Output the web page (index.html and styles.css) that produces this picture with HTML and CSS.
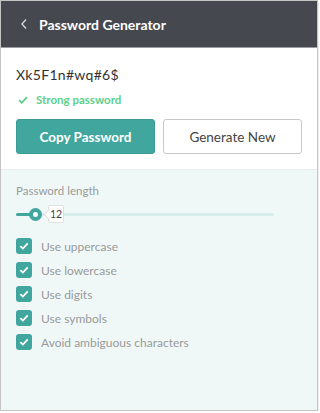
FILE: index.html
```html
<!DOCTYPE html>
<html>
<head>
<meta charset="utf-8">
<link rel="stylesheet" href="styles.css">
</head>
<body>
<div class="card">
  <div class="header">
    <svg class="back" width="8" height="12" viewBox="0 0 8 12"><path d="M6 1.5 L2 6 L6 10.5" fill="none" stroke="#d0d2d6" stroke-width="1.4"/></svg>
    <span class="title">Password Generator</span>
  </div>
  <div class="top">
    <div class="pw">Xk5F1n#wq#6$</div>
    <div class="strength">
      <svg width="10" height="8" viewBox="0 0 10 8"><path d="M1 4.2 L3.8 6.8 L9 1.2" fill="none" stroke="#5cd08a" stroke-width="1.8"/></svg>
      <span>Strong password</span>
    </div>
    <div class="buttons">
      <button class="btn primary">Copy Password</button>
      <button class="btn secondary">Generate New</button>
    </div>
  </div>
  <div class="settings">
    <div class="label">Password length</div>
    <div class="slider">
      <div class="track"><div class="fill"></div><div class="thumb"></div></div>
      <div class="value">12</div>
    </div>
    <ul class="options">
      <li><span class="cb"><svg width="10" height="8" viewBox="0 0 10 8"><path d="M1.3 4.2 L3.9 6.6 L8.7 1.4" fill="none" stroke="#fff" stroke-width="1.8"/></svg></span>Use uppercase</li>
      <li><span class="cb"><svg width="10" height="8" viewBox="0 0 10 8"><path d="M1.3 4.2 L3.9 6.6 L8.7 1.4" fill="none" stroke="#fff" stroke-width="1.8"/></svg></span>Use lowercase</li>
      <li><span class="cb"><svg width="10" height="8" viewBox="0 0 10 8"><path d="M1.3 4.2 L3.9 6.6 L8.7 1.4" fill="none" stroke="#fff" stroke-width="1.8"/></svg></span>Use digits</li>
      <li><span class="cb"><svg width="10" height="8" viewBox="0 0 10 8"><path d="M1.3 4.2 L3.9 6.6 L8.7 1.4" fill="none" stroke="#fff" stroke-width="1.8"/></svg></span>Use symbols</li>
      <li><span class="cb"><svg width="10" height="8" viewBox="0 0 10 8"><path d="M1.3 4.2 L3.9 6.6 L8.7 1.4" fill="none" stroke="#fff" stroke-width="1.8"/></svg></span>Avoid ambiguous characters</li>
    </ul>
  </div>
</div>
</body>
</html>
```
FILE: styles.css
```css
* { box-sizing: border-box; }
html, body { margin: 0; padding: 0; background: #ffffff; }
body { font-family: Lato, "Open Sans", sans-serif; }
.card {
  width: 318px;
  height: 411px;
  border: 1px solid #c4c4c4;
  box-shadow: 0 1px 2px rgba(0,0,0,0.18);
  display: flex;
  flex-direction: column;
  background: #eff8f7;
}
.header {
  height: 47px;
  background: #46484f;
  border-bottom: 1px solid #9a9ca0;
  display: flex;
  align-items: center;
  padding-left: 19px;
  gap: 11px;
}
.title { color: #fff; font-weight: 700; font-size: 14px; }
.top {
  background: #fff;
  padding: 18px 15px 15px 15px;
  border-bottom: 1px solid #e6eeed;
}
.pw { color: #333; font-size: 14px; letter-spacing: 0.3px; height: 20px; }
.strength {
  display: flex; align-items: center; gap: 8px;
  margin-top: 7px;
  color: #5cd08a; font-size: 11.5px; font-weight: 700;
  padding-left: 2px;
}
.buttons { display: flex; gap: 8px; margin-top: 13px; }
.btn {
  width: 140px; height: 35px;
  border-radius: 3px;
  font-family: inherit;
  font-size: 13.5px;
}
.primary { background: #41a69d; border: 1px solid #3b9c93; color: #fff; font-weight: 700; }
.secondary { background: #fff; border: 1px solid #c9c9c9; color: #444; }
.settings { padding: 14px 15px; flex: 1; }
.label { color: #9a9a9a; font-size: 11.5px; }
.slider { display: flex; align-items: center; margin-top: 8px; height: 18px; position: relative; }
.track { width: 258px; height: 3px; background: #d6eeeb; position: relative; border-radius: 2px; }
.fill { width: 20px; height: 3px; background: #41a69d; border-radius: 2px; }
.thumb {
  position: absolute; left: 13px; top: -5px;
  width: 13px; height: 13px; border-radius: 50%;
  background: #fff; border: 4px solid #41a69d;
}
.value {
  position: absolute; left: 32px; top: 0;
  width: 16px; height: 18px;
  background: #fff; border: 1px solid #e0e0e0; border-radius: 2px;
  font-size: 10.5px; color: #444; text-align: center; line-height: 16px;
}
.value::before {
  content: ""; position: absolute; left: -4px; top: 5px;
  width: 6px; height: 6px; background: #fff;
  border-left: 1px solid #e0e0e0; border-bottom: 1px solid #e0e0e0;
  transform: rotate(45deg);
}
.options { list-style: none; margin: 15px 0 0 0; padding: 0; display: flex; flex-direction: column; gap: 8px; }
.options li { display: flex; align-items: center; gap: 9px; height: 16px; color: #9a9a9a; font-size: 12px; }
.cb {
  width: 16px; height: 16px; border-radius: 3px; background: #41a69d;
  display: flex; align-items: center; justify-content: center;
}
```
